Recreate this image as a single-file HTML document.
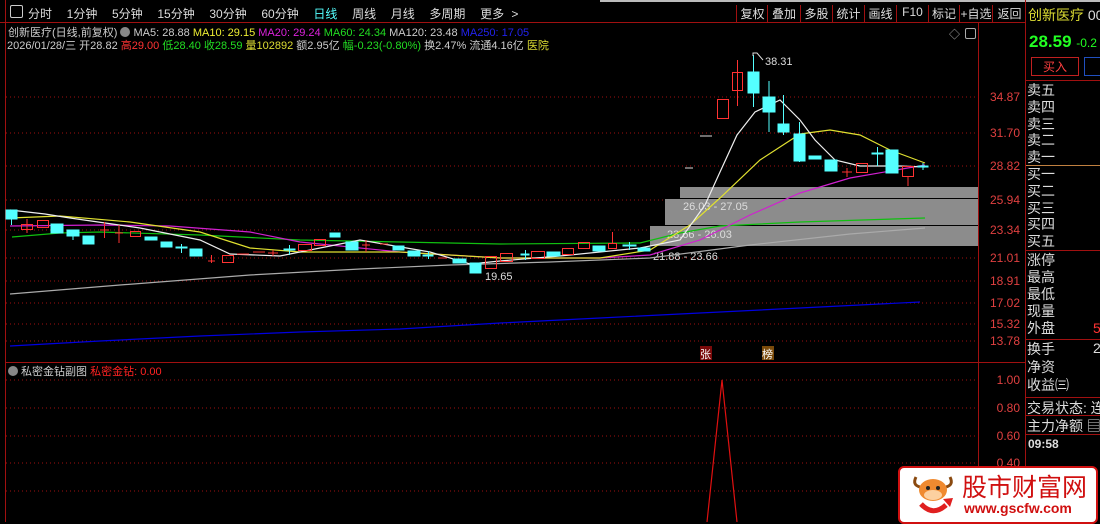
<!DOCTYPE html>
<html><head><meta charset="utf-8"><style>
*{margin:0;padding:0}
body{width:1100px;height:522px;background:#000;overflow:hidden;position:relative;font-family:"Liberation Sans","Noto Sans CJK SC",sans-serif;font-size:12px;color:#ddd}
.a{position:absolute;white-space:nowrap}
.b{position:absolute;top:5px;font-size:12px;color:#ddd;border-left:1px solid #a01010;height:17px;text-align:center}
</style></head><body>
<svg class="a" style="left:0;top:0" width="1100" height="522" font-family="Liberation Sans,Noto Sans CJK SC,sans-serif">
<rect x="600" y="0" width="500" height="2" fill="#bbb"/>
<line x1="0" y1="22.5" x2="1026" y2="22.5" stroke="#a01010"/>
<line x1="5.5" y1="0" x2="5.5" y2="522" stroke="#a01010"/>
<line x1="978.5" y1="22" x2="978.5" y2="522" stroke="#a01010"/>
<line x1="1025.5" y1="0" x2="1025.5" y2="522" stroke="#a01010"/>
<line x1="6" y1="362.5" x2="1025" y2="362.5" stroke="#a01010"/>
<g stroke="#a01010" stroke-dasharray="1 3">
<line x1="6" y1="97" x2="978" y2="97"/><line x1="6" y1="133" x2="978" y2="133"/><line x1="6" y1="166" x2="978" y2="166"/><line x1="6" y1="200" x2="978" y2="200"/><line x1="6" y1="230" x2="978" y2="230"/><line x1="6" y1="258" x2="978" y2="258"/><line x1="6" y1="281" x2="978" y2="281"/><line x1="6" y1="303" x2="978" y2="303"/><line x1="6" y1="324" x2="978" y2="324"/><line x1="6" y1="341" x2="978" y2="341"/>
<line x1="6" y1="380" x2="978" y2="380"/><line x1="6" y1="408" x2="978" y2="408"/><line x1="6" y1="436" x2="978" y2="436"/><line x1="6" y1="463" x2="978" y2="463"/><line x1="6" y1="491" x2="978" y2="491"/>
</g>
<g fill="#e04040" font-size="12" text-anchor="end">
<text x="1020" y="101">34.87</text><text x="1020" y="137">31.70</text><text x="1020" y="170">28.82</text><text x="1020" y="204">25.94</text><text x="1020" y="234">23.34</text><text x="1020" y="262">21.01</text><text x="1020" y="285">18.91</text><text x="1020" y="307">17.02</text><text x="1020" y="328">15.32</text><text x="1020" y="345">13.78</text>
<text x="1020" y="384">1.00</text><text x="1020" y="412">0.80</text><text x="1020" y="440">0.60</text><text x="1020" y="467">0.40</text>
</g>
<rect x="680" y="187" width="298" height="11" fill="#8c8c8c"/>
<rect x="665" y="199" width="313" height="26" fill="#8c8c8c"/>
<rect x="650" y="226" width="328" height="20" fill="#8c8c8c"/>
<g fill="#ddd" font-size="11"><text x="683" y="210">26.03 - 27.05</text><text x="667" y="238">23.66 - 26.03</text><text x="653" y="260">21.88 - 23.66</text><text x="485" y="280">19.65</text><text x="765" y="65">38.31</text></g>
<g fill="none" stroke-width="1.2">
<polyline stroke="#0000e0" points="10,346 100,341 200,336 300,332 400,329 500,323 600,318 700,313 800,308 920,302"/>
<polyline stroke="#aaa" points="10,294 120,285 250,275 360,269 450,265 550,262 650,258 750,245 850,234 925,228"/>
<polyline stroke="#10c010" points="12,237 60,233 100,232 200,235 300,240 400,242 500,244 640,243 680,233 720,226 800,222 925,218"/>
<polyline stroke="#d020d0" points="10,226 100,225 170,226 250,232 300,242 400,252 500,258 600,258 650,255 700,240 750,215 800,193 850,178 925,165"/>
<polyline stroke="#e0e030" points="10,218 60,216 130,222 200,232 250,248 300,252 400,252 500,258 600,258 650,250 690,225 720,198 760,160 800,134 830,130 860,135 890,150 925,163"/>
<polyline stroke="#eee" points="10,210 45,214 70,218 140,228 200,240 230,254 280,256 320,248 360,240 430,252 470,264 500,261 560,256 640,248 680,240 705,205 720,172 737,135 755,112 780,100 800,120 815,140 835,160 860,166 900,166 925,167"/>
</g>
<g fill="#54ffff" stroke="#54ffff">
<rect x="6" y="210" width="11" height="9"/><line x1="11.5" y1="219" x2="11.5" y2="225"/>
<rect x="51" y="224" width="12" height="9"/><rect x="67" y="230" width="12" height="6"/><line x1="73" y1="236" x2="73" y2="240"/>
<rect x="83" y="236" width="11" height="8"/><rect x="145" y="237" width="12" height="3"/>
<rect x="161" y="242" width="11" height="5"/><rect x="176" y="247" width="11" height="1"/><line x1="181.5" y1="244" x2="181.5" y2="253"/>
<rect x="190" y="249" width="12" height="7"/><rect x="284" y="249" width="11" height="1"/><line x1="289.5" y1="245" x2="289.5" y2="255"/>
<rect x="330" y="233" width="10" height="4"/><rect x="346" y="242" width="12" height="8"/>
<rect x="393" y="246" width="11" height="4"/><rect x="408" y="251" width="12" height="5"/><rect x="423" y="255" width="10" height="1"/><line x1="428.5" y1="251" x2="428.5" y2="259"/>
<rect x="453" y="259" width="13" height="4"/><rect x="470" y="263" width="11" height="10"/>
<rect x="521" y="254" width="8" height="1"/><line x1="525.5" y1="250" x2="525.5" y2="260"/>
<rect x="547" y="252" width="13" height="4"/><rect x="593" y="246" width="12" height="5"/>
<rect x="623" y="245" width="13" height="1"/><line x1="629.5" y1="242" x2="629.5" y2="250"/><rect x="638" y="248" width="12" height="3"/>
<rect x="748" y="72" width="11" height="21"/><line x1="753.5" y1="55" x2="753.5" y2="107"/>
<rect x="763" y="97" width="12" height="15"/><line x1="769" y1="81" x2="769" y2="132"/>
<rect x="778" y="124" width="11" height="8"/><line x1="783.5" y1="95" x2="783.5" y2="135"/>
<rect x="794" y="134" width="11" height="27"/><line x1="799.5" y1="122" x2="799.5" y2="162"/>
<rect x="809" y="156" width="12" height="3"/><rect x="825" y="160" width="12" height="11"/>
<rect x="872" y="153" width="11" height="1"/><line x1="877.5" y1="147" x2="877.5" y2="166"/>
<rect x="886" y="150" width="12" height="23"/><rect x="918" y="166" width="10" height="1"/><line x1="923" y1="163" x2="923" y2="170"/>
</g>
<g fill="none" stroke="#ff3232">
<rect x="21.5" y="224.5" width="11" height="5"/><line x1="27" y1="219" x2="27" y2="233"/>
<rect x="37.5" y="220.5" width="11" height="7"/>
<line x1="100" y1="230" x2="109" y2="230"/><line x1="104.5" y1="222" x2="104.5" y2="238"/>
<line x1="115" y1="233" x2="123" y2="233"/><line x1="119" y1="225" x2="119" y2="243"/>
<rect x="130.5" y="231.5" width="10" height="5"/>
<line x1="208" y1="261" x2="215" y2="261"/><line x1="211.5" y1="255" x2="211.5" y2="263"/>
<rect x="222.5" y="255.5" width="11" height="7"/>
<line x1="237" y1="254" x2="249" y2="254"/><line x1="253" y1="252" x2="265" y2="252"/><line x1="268" y1="253" x2="278" y2="253"/><line x1="273" y1="250" x2="273" y2="256"/>
<rect x="298.5" y="244.5" width="13" height="6"/><rect x="314.5" y="239.5" width="11" height="6"/>
<line x1="362" y1="245" x2="370" y2="245"/><line x1="366" y1="240" x2="366" y2="252"/>
<line x1="380" y1="244" x2="388" y2="244"/><line x1="438" y1="258" x2="447" y2="258"/>
<rect x="485.5" y="256.5" width="11" height="12"/><rect x="500.5" y="253.5" width="12" height="8"/>
<rect x="531.5" y="251.5" width="13" height="7"/><rect x="562.5" y="248.5" width="11" height="6"/><rect x="578.5" y="242.5" width="11" height="6"/>
<rect x="608.5" y="243.5" width="8" height="5"/><line x1="612.5" y1="232" x2="612.5" y2="243"/>
<line x1="685" y1="168" x2="693" y2="168" stroke="#ddd"/><line x1="700" y1="136" x2="712" y2="136" stroke="#ddd"/>
<rect x="717.5" y="99.5" width="11" height="19"/>
<rect x="732.5" y="72.5" width="10" height="18"/><line x1="737.5" y1="60" x2="737.5" y2="106"/>
<line x1="842" y1="172" x2="852" y2="172"/><line x1="847" y1="168" x2="847" y2="177"/>
<rect x="856.5" y="163.5" width="11" height="9"/>
<rect x="902.5" y="166.5" width="11" height="10"/><line x1="908" y1="176" x2="908" y2="186"/>
</g>
<path d="M753 56 L753 53 L757 53 L763 60" stroke="#ddd" fill="none"/>
<polyline points="707,522 722,380 737,522" fill="none" stroke="#e01010" stroke-width="1.2"/>
<rect x="700" y="346" width="12" height="14" fill="#7a0a0a"/><text x="700" y="358" fill="#fff" font-size="11">张</text>
<rect x="762" y="346" width="12" height="14" fill="#7a4a0a"/><text x="762" y="358" fill="#fff" font-size="11">榜</text>
<g stroke="#a01010">
<line x1="1026" y1="80.5" x2="1100" y2="80.5"/><line x1="1026" y1="250.5" x2="1100" y2="250.5"/><line x1="1026" y1="339.5" x2="1100" y2="339.5"/><line x1="1026" y1="397.5" x2="1100" y2="397.5"/><line x1="1026" y1="415.5" x2="1100" y2="415.5"/><line x1="1026" y1="434.5" x2="1100" y2="434.5"/>
</g>
<line x1="1026" y1="165.5" x2="1100" y2="165.5" stroke="#c08040"/>
<rect x="1031.5" y="57.5" width="47" height="18" fill="none" stroke="#c02020"/>
<text x="1043" y="71" fill="#ff4040" font-size="12">买入</text>
<rect x="1084.5" y="57.5" width="20" height="18" fill="none" stroke="#2050c0"/>
</svg>
<div class="a" style="left:10px;top:5px;width:11px;height:11px;border:1px solid #ccc;border-radius:2px"></div>
<div class="a" style="left:28px;top:5px;color:#ddd;font-size:12px;word-spacing:4px">分时&nbsp; 1分钟&nbsp; 5分钟&nbsp; 15分钟&nbsp; 30分钟&nbsp; 60分钟&nbsp; <span style="color:#5ff">日线</span>&nbsp; 周线&nbsp; 月线&nbsp; 多周期&nbsp; 更多 &gt;</div>
<div class="b" style="left:736px;width:31px">复权</div>
<div class="b" style="left:767px;width:32px">叠加</div>
<div class="b" style="left:800px;width:31px">多股</div>
<div class="b" style="left:832px;width:31px">统计</div>
<div class="b" style="left:864px;width:31px">画线</div>
<div class="b" style="left:896px;width:31px">F10</div>
<div class="b" style="left:928px;width:30px">标记</div>
<div class="b" style="left:959px;width:32px">+自选</div>
<div class="b" style="left:992px;width:33px">返回</div>
<div class="a" style="left:8px;top:24px;font-size:11px;color:#ccc">创新医疗(日线,前复权) <span style="display:inline-block;width:10px;height:10px;border-radius:50%;background:#888;vertical-align:-1px"></span> MA5: 28.88 <span style="color:#ee3">MA10: 29.15</span> <span style="color:#d2d">MA20: 29.24</span> <span style="color:#2d2">MA60: 24.34</span> MA120: 23.48 <span style="color:#22e">MA250: 17.05</span></div>
<div class="a" style="left:7px;top:37px;font-size:11px;color:#ccc">2026/01/28/三 开28.82 <span style="color:#f33">高29.00</span> <span style="color:#2d2">低28.40 收28.59</span> <span style="color:#dd3">量102892</span> 额2.95亿 <span style="color:#2d2">幅-0.23(-0.80%)</span> 换2.47% 流通4.16亿 <span style="color:#dd3">医院</span></div>
<div class="a" style="left:949px;top:26px;color:#aaa;font-size:11px">◇</div>
<div class="a" style="left:965px;top:28px;width:9px;height:9px;border:1px solid #aaa;border-radius:2px"></div>
<div class="a" style="left:8px;top:363px;font-size:11px;color:#ccc"><span style="display:inline-block;width:10px;height:10px;border-radius:50%;background:#888;vertical-align:-1px"></span> 私密金钻副图 <span style="color:#f22">私密金钻: 0.00</span></div>
<div class="a" style="left:1028px;top:5px;color:#dd3;font-size:14px">创新医疗 <span style="color:#ddd">00</span></div>
<div class="a" style="left:1029px;top:32px;color:#2f2;font-size:17px;font-weight:bold">28.59 <span style="font-size:12px;font-weight:normal">-0.2</span></div>
<div class="a" style="left:1027px;top:82px;color:#ddd;font-size:14px;line-height:16.8px">卖五<br>卖四<br>卖三<br>卖二<br>卖一</div>
<div class="a" style="left:1027px;top:166px;color:#ddd;font-size:14px;line-height:16.8px">买一<br>买二<br>买三<br>买四<br>买五</div>
<div class="a" style="left:1027px;top:252px;color:#ddd;font-size:14px;line-height:17px">涨停<br>最高<br>最低<br>现量<br>外盘</div>
<div class="a" style="left:1093px;top:320px;color:#f33;font-size:14px">5</div>
<div class="a" style="left:1027px;top:340px;color:#ddd;font-size:14px;line-height:18px">换手<br>净资<br>收益㈢</div>
<div class="a" style="left:1093px;top:340px;color:#ddd;font-size:14px">2</div>
<div class="a" style="left:1027px;top:398px;color:#ddd;font-size:14px">交易状态: 连</div>
<div class="a" style="left:1027px;top:416px;color:#ddd;font-size:14px">主力净额 ▤</div>
<div class="a" style="left:1028px;top:437px;color:#ddd;font-size:12px;font-weight:bold">09:58</div>
<div class="a" style="left:898px;top:466px;width:196px;height:54px;background:#fff;border:2px solid #d01010;border-radius:6px"></div>
<svg class="a" style="left:908px;top:471px" width="52" height="48">
<path d="M8 6 Q4 14 12 16 M42 6 Q46 14 38 16" stroke="#8a4a10" stroke-width="3" fill="none"/>
<ellipse cx="25" cy="19" rx="14" ry="11" fill="#f08a30"/>
<ellipse cx="25" cy="24" rx="9" ry="5" fill="#fcd0a0"/>
<circle cx="20" cy="17" r="2" fill="#222"/><circle cx="30" cy="17" r="2" fill="#222"/>
<path d="M13 33 Q25 46 38 34" stroke="#e02020" stroke-width="5" fill="none"/>
<path d="M35 28 L45 27 L42 36 Z" fill="#e02020"/>
</svg>
<div class="a" style="left:962px;top:468px;color:#d01010;font-size:25px;font-family:'Noto Sans CJK SC',sans-serif;letter-spacing:0px">股市财富网</div>
<div class="a" style="left:964px;top:500px;color:#d01010;font-size:14px;font-weight:bold">www.gscfw.com</div>
</body></html>
